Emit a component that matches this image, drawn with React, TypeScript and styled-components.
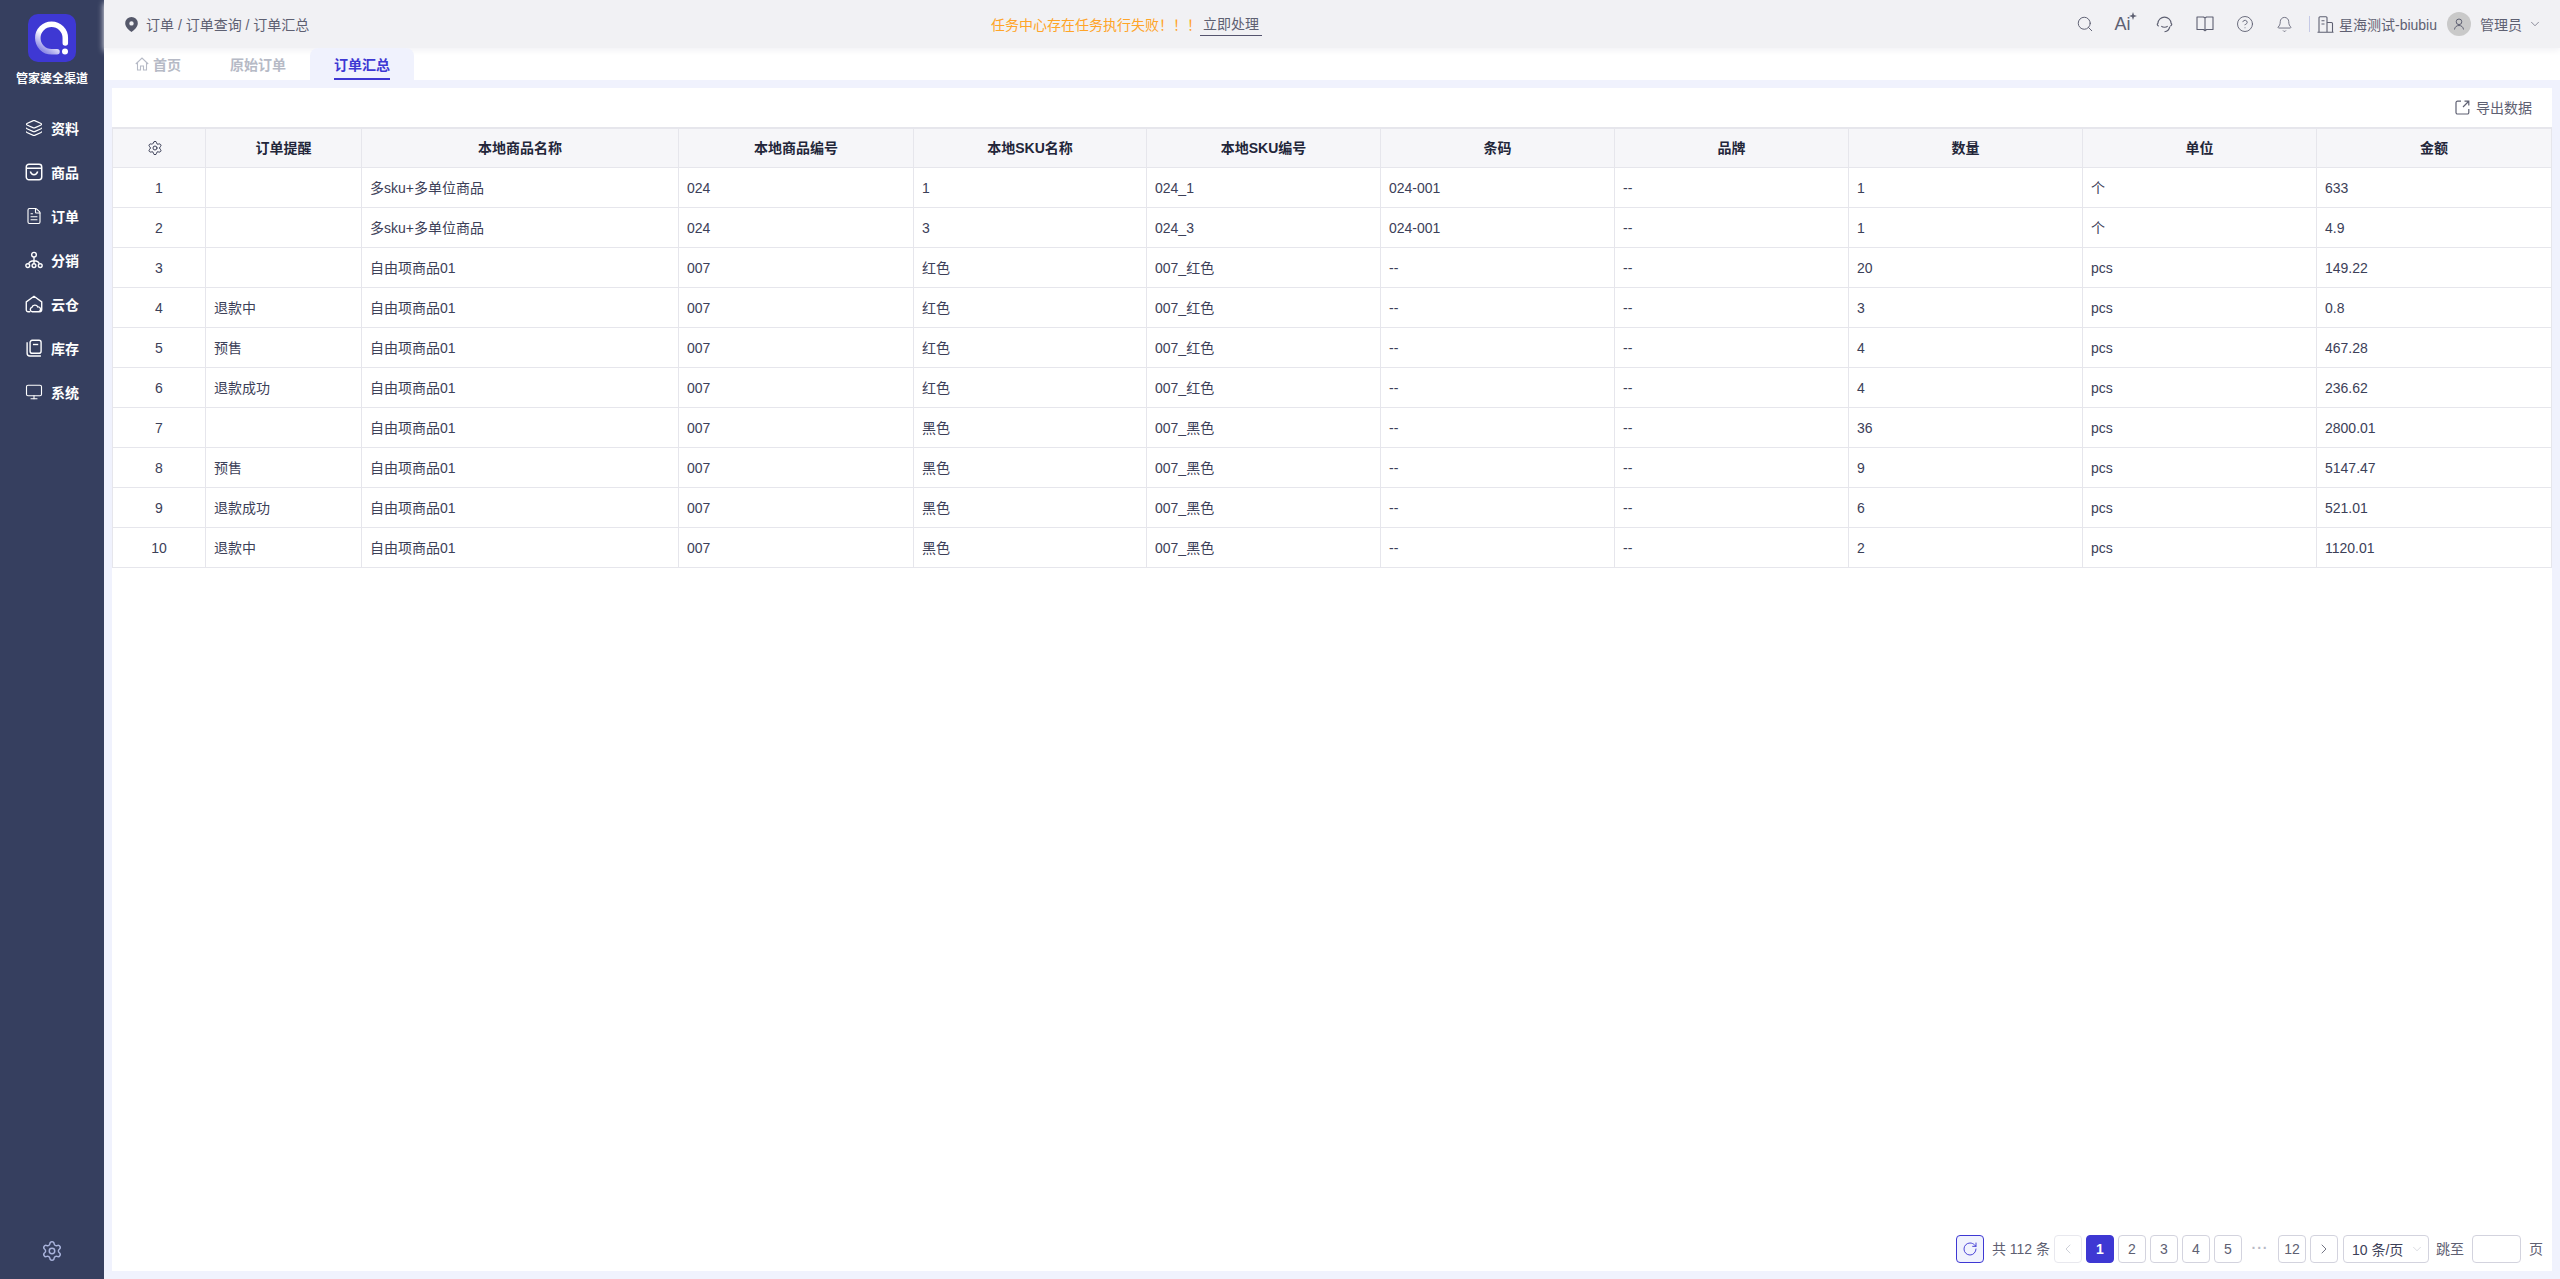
import React from 'react';
import styled, { createGlobalStyle } from 'styled-components';
import { ChevronDown, ChevronLeft, ChevronRight, Layers, Monitor, RotateCw, Search, FileText, Bell, CircleHelp, Settings } from 'lucide-react';

const FONT = `'Liberation Sans', 'Noto Sans CJK SC', sans-serif`;

const GlobalStyle = createGlobalStyle`
  html, body { margin: 0; height: 100%; }
  #root { height: 100%; }
  body { font-family: ${FONT}; font-size: 14px; color: #3c4058; background: #f0f2fd; overflow: hidden; }
  * { box-sizing: border-box; }
`;

const Shell = styled.div`
  display: flex;
  width: 2560px;
  height: 1279px;
`;

const Sidebar = styled.aside`
  width: 104px;
  flex: none;
  background: #363f5f;
  display: flex;
  flex-direction: column;
  align-items: center;
  padding-top: 14px;
`;

const LogoBox = styled.div`
  width: 48px;
  height: 48px;
  border-radius: 10px;
  background: #3e38d3;
  line-height: 0;
`;

const LogoName = styled.div`
  margin-top: 9px;
  font-size: 12px;
  line-height: 16px;
  font-weight: 700;
  color: #fff;
  white-space: nowrap;
`;

const Nav = styled.nav`
  margin-top: 19px;
  width: 100%;
  display: flex;
  flex-direction: column;
`;

const NavItem = styled.a`
  height: 44px;
  display: flex;
  align-items: center;
  padding-left: 25px;
  gap: 8px;
  color: #fff;
  font-size: 14px;
  font-weight: 700;
  svg { width: 18px; height: 18px; flex: none; }
`;

const SideFooter = styled.div`
  margin-top: auto;
  padding-bottom: 17px;
  color: #a9b3dc;
  line-height: 0;
`;

const Main = styled.div`
  flex: 1;
  min-width: 0;
  display: flex;
  flex-direction: column;
`;

const Header = styled.header`
  height: 48px;
  flex: none;
  position: relative;
  z-index: 2;
  background: #f1f1f4;
  box-shadow: 0 3px 6px #f3f3f6;
  display: flex;
  align-items: center;
  padding: 0 18px 0 21px;
  color: #5e6072;
`;

const Crumbs = styled.div`
  display: flex;
  align-items: center;
  gap: 8px;
  width: 218px;
  flex: none;
  white-space: nowrap;
`;

const Notice = styled.div`
  margin-left: 648px;
  display: flex;
  align-items: center;
  color: #ffa428;
  white-space: nowrap;
`;

const NoticeLink = styled.a`
  margin-left: -1px;
  padding: 0 3px 2px;
  color: #5e6072;
  border-bottom: 1px solid #55546e;
`;

const HeaderTools = styled.div`
  margin-left: auto;
  display: flex;
  align-items: center;
`;

const ToolIcon = styled.span`
  width: 40px;
  height: 24px;
  display: flex;
  align-items: center;
  justify-content: center;
  color: #5e6072;
`;

const AiMark = styled.span`
  font-size: 18px;
  line-height: 20px;
  color: #5e6072;
  position: relative;
  padding-right: 5px;
`;

const Spark = styled.svg`
  position: absolute;
  right: -2px;
  top: -2px;
  width: 8px;
  height: 8px;
  fill: currentColor;
`;

const Divider = styled.span`
  width: 1px;
  height: 16px;
  margin: 0 7px 0 4px;
  background: #c5c9e6;
`;

const ShopName = styled.span`
  margin-left: 5px;
  white-space: nowrap;
  color: #5e6072;
`;

const Avatar = styled.span`
  width: 24px;
  height: 24px;
  margin-left: 10px;
  border-radius: 50%;
  background: #c9c9c9;
  display: flex;
  align-items: center;
  justify-content: center;
  color: #5e6072;
`;

const UserName = styled.span`
  margin: 0 6px 0 9px;
  white-space: nowrap;
  color: #5e6072;
`;

const TabBar = styled.div`
  height: 32px;
  flex: none;
  background: #fff;
  display: flex;
  padding-left: 6px;
`;

const Tab = styled.div<{ $active?: boolean; $narrow?: boolean }>`
  width: ${p => (p.$narrow ? 96 : 104)}px;
  height: 32px;
  display: flex;
  align-items: center;
  justify-content: center;
  gap: 4px;
  position: relative;
  z-index: 3;
  font-weight: 700;
  color: ${p => (p.$active ? '#3e38d3' : '#b6bac6')};
  background: ${p => (p.$active ? '#f0f2fd' : 'transparent')};
  border-radius: 8px 8px 0 0;
  &::after {
    content: '';
    display: ${p => (p.$active ? 'block' : 'none')};
    position: absolute;
    left: 24px;
    right: 24px;
    bottom: 0;
    height: 2px;
    background: #3e38d3;
  }
`;

const Content = styled.main`
  flex: 1;
  min-height: 0;
  padding: 8px;
  display: flex;
`;

const Panel = styled.section`
  flex: 1;
  min-width: 0;
  background: #fff;
  display: flex;
  flex-direction: column;
`;

const Toolbar = styled.div`
  height: 39px;
  flex: none;
  display: flex;
  align-items: center;
  justify-content: flex-end;
  padding-right: 20px;
`;

const ExportLink = styled.a`
  display: flex;
  align-items: center;
  gap: 6px;
  line-height: 20px;
  color: #5e6072;
`;

const TableArea = styled.div`
  flex: 1;
  min-height: 0;
`;

const Table = styled.table`
  width: 2440px;
  table-layout: fixed;
  border-collapse: separate;
  border-spacing: 0;
  border-top: 2px solid #e6e6ec;
`;

const HeadCell = styled.th`
  height: 39px;
  padding: 0;
  line-height: 20px;
  background: #f6f6f9;
  border-right: 1px solid #e6e6ec;
  border-bottom: 1px solid #e6e6ec;
  text-align: center;
  font-weight: 700;
  font-size: 14px;
  color: #23263a;
  &:first-child { border-left: 1px solid #e6e6ec; padding-right: 8px; }
  svg { display: block; margin: 0 auto; }
`;

const Cell = styled.td<{ $center?: boolean }>`
  height: 40px;
  padding: 0 8px;
  line-height: 20px;
  border-right: 1px solid #e6e6ec;
  border-bottom: 1px solid #e6e6ec;
  text-align: ${p => (p.$center ? 'center' : 'left')};
  color: #3c4058;
  white-space: nowrap;
  &:first-child { border-left: 1px solid #e6e6ec; }
`;

const Footer = styled.footer`
  height: 36px;
  flex: none;
  display: flex;
  justify-content: flex-end;
  align-items: flex-start;
  padding-right: 9px;
  gap: 4px;
  color: #5e6072;
`;

const PageButton = styled.span<{ $active?: boolean; $disabled?: boolean }>`
  width: 28px;
  height: 28px;
  display: flex;
  align-items: center;
  justify-content: center;
  border-radius: 4px;
  border: 1px solid ${p => (p.$active ? '#3e38d3' : p.$disabled ? '#e8e8ee' : '#d3d3de')};
  background: ${p => (p.$active ? '#3e38d3' : '#fff')};
  color: ${p => (p.$active ? '#fff' : p.$disabled ? '#c6c8d2' : '#5e6072')};
  font-weight: ${p => (p.$active ? 700 : 400)};
`;

const RefreshButton = styled(PageButton)`
  border-color: #3e38d3;
  background: #f0f2fd;
  color: #3e38d3;
  margin-right: 4px;
`;

const PageLabel = styled.span<{ $gap?: number }>`
  line-height: 28px;
  white-space: nowrap;
  margin: 0 ${p => p.$gap ?? 0}px;
`;

const Ellipsis = styled.span`
  width: 28px;
  line-height: 26px;
  text-align: center;
  color: #b8bac6;
  letter-spacing: 1px;
  font-weight: 700;
`;

const SizeSelect = styled.span`
  width: 86px;
  height: 28px;
  margin-left: 1px;
  display: flex;
  align-items: center;
  justify-content: space-between;
  padding: 0 4px 0 8px;
  border: 1px solid #d3d3de;
  border-radius: 4px;
  color: #3c4058;
  white-space: nowrap;
`;

const JumpInput = styled.span`
  width: 49px;
  height: 28px;
  border: 1px solid #d3d3de;
  border-radius: 4px;
  margin: 0 4px 0 1px;
`;

const GoodsIcon = () => (
  <svg viewBox="0 0 17 17" fill="none" stroke="currentColor" strokeWidth="1.4">
    <rect x="1.2" y="1.2" width="14.6" height="14.6" rx="2.5" />
    <path d="M1.2 5h14.6M5 8c.6 2 2 3 3.5 3s2.900-1 3.500-3" />
  </svg>
);

const BranchIcon = () => (
  <svg viewBox="0 0 17 17" fill="none" stroke="currentColor" strokeWidth="1.3">
    <circle cx="8.500" cy="3.500" r="2.200" />
    <circle cx="2.600" cy="13.800" r="1.800" />
    <circle cx="8.500" cy="13.800" r="1.800" />
    <circle cx="14.400" cy="13.800" r="1.800" />
    <path d="M8.500 5.700V12M3.500 12.200c.5-2 2-3 5-3s4.500 1 5 3" />
  </svg>
);

const DepotIcon = () => (
  <svg viewBox="0 0 17 17" fill="none" stroke="currentColor" strokeWidth="1.3">
    <path d="M5 15.800H3a1.800 1.800 0 0 1-1.800-1.800V6.500L8.500 1.200l7.300 5.300V14a1.800 1.800 0 0 1-1.800 1.800h-.5" />
    <path d="M6.800 15.800a2.100 2.100 0 0 1-.3-4.100 3 3 0 0 1 5.600-.4 2.300 2.300 0 0 1 .9 4.500z" />
  </svg>
);

const StockIcon = () => (
  <svg viewBox="0 0 17 17" fill="none" stroke="currentColor" strokeWidth="1.3">
    <path d="M2 3v10.500a2.500 2.500 0 0 0 2.500 2.500H15" />
    <rect x="4.800" y="1.200" width="10.400" height="12.300" rx="2" />
    <path d="M7.500 5.200h5" />
  </svg>
);

const HomeIcon = () => (
  <svg width="14" height="14" viewBox="0 0 14 14" fill="none" stroke="#b6bac6" strokeWidth="1.100">
    <path d="M.8 7 7 1l6.200 6M2.500 5.800V13h3V9h3v4h3V5.800" />
  </svg>
);

const PinIcon = () => (
  <svg width="13" height="15" viewBox="0 0 13 15">
    <path fillRule="evenodd" fill="#55586a" d="M6.500 0A6.300 6.300 0 0 0 .2 6.300c0 3.800 3.900 7 6.300 8.700 2.400-1.700 6.300-4.900 6.300-8.700A6.300 6.300 0 0 0 6.500 0zm0 4.200a2.200 2.200 0 1 1 0 4.400 2.200 2.200 0 0 1 0-4.400z" />
  </svg>
);

const HeadsetIcon = () => (
  <svg width="17" height="17" viewBox="0 0 16 16" fill="none" stroke="currentColor" strokeWidth="1.100">
    <path d="M2.500 9.500C1 9 .8 7.500 1.800 6.800 2 3.500 4.800 1 8 1s6 2.500 6.200 5.800c1 .7.800 2.200-.7 2.700" />
    <path d="M5 9.500c1.500 1.500 4.500 1.500 6 0M13 10c-.5 2.500-2.500 4.500-5 4.800" />
  </svg>
);

const BookIcon = () => (
  <svg width="18" height="16" viewBox="0 0 18 16" fill="none" stroke="currentColor" strokeWidth="1.100">
    <path d="M1 1h6.500L9 2l1.500-1H17v12.500h-6.500L9 14.800l-1.500-1.300H1zM9 2v12.800" strokeLinejoin="round" />
  </svg>
);

const BuildingIcon = () => (
  <svg width="17" height="17" viewBox="0 0 17 17" fill="none" stroke="#5e6072" strokeWidth="1.100">
    <path d="M.5 16.300h16M2 16.300V1.800A1 1 0 0 1 3 .8h6a1 1 0 0 1 1 1v14.500M10 6.500h4.500a1 1 0 0 1 1 1v8.800M4.500 4.800h3M4.500 8h3" />
  </svg>
);

const ExportIcon = () => (
  <svg width="15" height="15" viewBox="0 0 15 15" fill="none" stroke="currentColor" strokeWidth="1.200">
    <path d="M6 1.200H2.500A1.500 1.500 0 0 0 1 2.700v9.800A1.500 1.500 0 0 0 2.500 14h9.800a1.500 1.500 0 0 0 1.500-1.500V9M8 7l5.500-5.500M9.500 1.200h4.300v4.300" />
  </svg>
);

const UserGlyph = () => (
  <svg width="12" height="12" viewBox="0 0 12 12" fill="none" stroke="currentColor" strokeWidth="1">
    <circle cx="6" cy="3.800" r="2.800" />
    <path d="M1.500 11.500c.3-2.500 2-4 4.500-4s4.200 1.500 4.500 4" />
  </svg>
);

const navItems = [
  { label: '资料', icon: <Layers strokeWidth={1.5} /> },
  { label: '商品', icon: <GoodsIcon /> },
  { label: '订单', icon: <FileText strokeWidth={1.5} /> },
  { label: '分销', icon: <BranchIcon /> },
  { label: '云仓', icon: <DepotIcon /> },
  { label: '库存', icon: <StockIcon /> },
  { label: '系统', icon: <Monitor strokeWidth={1.5} /> },
];

const columns = ['订单提醒', '本地商品名称', '本地商品编号', '本地SKU名称', '本地SKU编号', '条码', '品牌', '数量', '单位', '金额'];
const widths = [94, 156, 317, 235, 233, 234, 234, 234, 234, 234, 235];

const rows = [
  ['', '多sku+多单位商品', '024', '1', '024_1', '024-001', '--', '1', '个', '633'],
  ['', '多sku+多单位商品', '024', '3', '024_3', '024-001', '--', '1', '个', '4.9'],
  ['', '自由项商品01', '007', '红色', '007_红色', '--', '--', '20', 'pcs', '149.22'],
  ['退款中', '自由项商品01', '007', '红色', '007_红色', '--', '--', '3', 'pcs', '0.8'],
  ['预售', '自由项商品01', '007', '红色', '007_红色', '--', '--', '4', 'pcs', '467.28'],
  ['退款成功', '自由项商品01', '007', '红色', '007_红色', '--', '--', '4', 'pcs', '236.62'],
  ['', '自由项商品01', '007', '黑色', '007_黑色', '--', '--', '36', 'pcs', '2800.01'],
  ['预售', '自由项商品01', '007', '黑色', '007_黑色', '--', '--', '9', 'pcs', '5147.47'],
  ['退款成功', '自由项商品01', '007', '黑色', '007_黑色', '--', '--', '6', 'pcs', '521.01'],
  ['退款中', '自由项商品01', '007', '黑色', '007_黑色', '--', '--', '2', 'pcs', '1120.01'],
];

const App = () => (
  <>
    <GlobalStyle />
    <Shell>
      <Sidebar>
        <LogoBox>
          <svg width="48" height="48" viewBox="0 0 48 48" fill="none">
            <defs>
              <linearGradient id="ring" x1="0.1" y1="0.9" x2="0.6" y2="0.2">
                <stop offset="0" stopColor="#8f8ce6" />
                <stop offset="0.6" stopColor="#fff" />
              </linearGradient>
            </defs>
            <path d="M37.300 29V24A13.750 13.750 0 1 0 23.500 37.750H29" stroke="url(#ring)" strokeWidth="5.500" strokeLinecap="round" />
            <circle cx="37" cy="37.500" r="3" fill="#fff" />
          </svg>
        </LogoBox>
        <LogoName>管家婆全渠道</LogoName>
        <Nav>
          {navItems.map(item => (
            <NavItem key={item.label}>
              {item.icon}
              {item.label}
            </NavItem>
          ))}
        </Nav>
        <SideFooter>
          <Settings size={22} strokeWidth={1.6} />
        </SideFooter>
      </Sidebar>
      <Main>
        <Header>
          <Crumbs>
            <PinIcon />
            订单 / 订单查询 / 订单汇总
          </Crumbs>
          <Notice>
            任务中心存在任务执行失败！！！
            <NoticeLink>立即处理</NoticeLink>
          </Notice>
          <HeaderTools>
            <ToolIcon><Search size={18} strokeWidth={1.3} /></ToolIcon>
            <ToolIcon>
              <AiMark>
                Ai
                <Spark viewBox="0 0 8 8"><path d="M4 0l1 3 3 1-3 1-1 3-1-3-3-1 3-1z" /></Spark>
              </AiMark>
            </ToolIcon>
            <ToolIcon><HeadsetIcon /></ToolIcon>
            <ToolIcon><BookIcon /></ToolIcon>
            <ToolIcon><CircleHelp size={18} strokeWidth={1.2} /></ToolIcon>
            <ToolIcon><Bell size={17} strokeWidth={1.2} /></ToolIcon>
            <Divider />
            <BuildingIcon />
            <ShopName>星海测试-biubiu</ShopName>
            <Avatar><UserGlyph /></Avatar>
            <UserName>管理员</UserName>
            <ChevronDown size={14} strokeWidth={1.2} color="#5e6072" />
          </HeaderTools>
        </Header>
        <TabBar>
          <Tab $narrow><HomeIcon />首页</Tab>
          <Tab>原始订单</Tab>
          <Tab $active>订单汇总</Tab>
        </TabBar>
        <Content>
          <Panel>
            <Toolbar>
              <ExportLink>
                <ExportIcon />
                导出数据
              </ExportLink>
            </Toolbar>
            <TableArea>
              <Table>
                <colgroup>
                  {widths.map((w, i) => <col key={i} width={w} />)}
                </colgroup>
                <thead>
                  <tr>
                    <HeadCell><Settings size={16} strokeWidth={1.5} color="#3c4058" /></HeadCell>
                    {columns.map(c => <HeadCell key={c}>{c}</HeadCell>)}
                  </tr>
                </thead>
                <tbody>
                  {rows.map((row, i) => (
                    <tr key={i}>
                      <Cell $center>{i + 1}</Cell>
                      {row.map((v, j) => <Cell key={j}>{v}</Cell>)}
                    </tr>
                  ))}
                </tbody>
              </Table>
            </TableArea>
            <Footer>
              <RefreshButton><RotateCw size={16} strokeWidth={1.4} /></RefreshButton>
              <PageLabel>共 112 条</PageLabel>
              <PageButton $disabled><ChevronLeft size={16} strokeWidth={1.3} /></PageButton>
              <PageButton $active>1</PageButton>
              <PageButton>2</PageButton>
              <PageButton>3</PageButton>
              <PageButton>4</PageButton>
              <PageButton>5</PageButton>
              <Ellipsis>···</Ellipsis>
              <PageButton>12</PageButton>
              <PageButton><ChevronRight size={16} strokeWidth={1.3} /></PageButton>
              <SizeSelect>10 条/页<ChevronDown size={14} strokeWidth={1.1} color="#c6c8d2" /></SizeSelect>
              <PageLabel $gap={3}>跳至</PageLabel>
              <JumpInput />
              <PageLabel>页</PageLabel>
            </Footer>
          </Panel>
        </Content>
      </Main>
    </Shell>
  </>
);

export default App;
